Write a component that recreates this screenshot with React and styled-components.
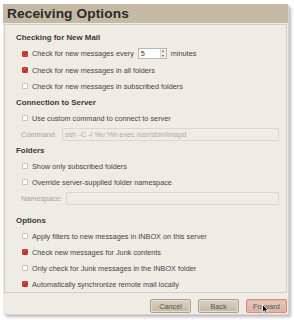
import React from "react";
import styled, { createGlobalStyle } from "styled-components";

const Global = createGlobalStyle`
  html, body { margin: 0; padding: 0; background: #ffffff; }
  body { font-family: "Liberation Sans", Arial, sans-serif; }
  * { box-sizing: border-box; }
`;

const Page = styled.div`
  width: 294px;
  height: 320px;
  padding: 4px 0 0 3px;
  background: #ffffff;
`;

const Window = styled.div`
  position: relative;
  width: 285px;
  height: 310px;
  background: #efebe5;
  display: flex;
  flex-direction: column;
  box-shadow: 1px 1px 0 #d6d3cf, 3px 3px 3px rgba(0, 0, 0, 0.28);
`;

const Header = styled.div`
  height: 19px;
  background: #c6b9a4;
  display: flex;
  align-items: center;
  padding-left: 4px;
  font-weight: bold;
  font-size: 13.7px;
  color: #2b2b2b;
  letter-spacing: 0.1px;
`;

const Panel = styled.div`
  margin: 1px 1px 0 1px;
  flex: 1;
  border: 1px solid #d5cec2;
  padding: 4px 0 0 11px;
  display: flex;
  flex-direction: column;
`;

const Section = styled.div`
  display: flex;
  flex-direction: column;
  margin-top: ${(p) => p.$gap || 0}px;
`;

const Heading = styled.div`
  height: 16px;
  display: flex;
  align-items: center;
  font-weight: bold;
  font-size: 7.9px;
  color: #3a3a3a;
`;

const Row = styled.div`
  height: ${(p) => p.$h || 16}px;
  display: flex;
  align-items: center;
  padding-left: ${(p) => p.$indent ?? 6}px;
  font-size: 7.3px;
  color: #464646;
  gap: 3px;
`;

const Box = styled.span`
  width: 6px;
  height: 6px;
  flex: none;
  border: 1px solid ${(p) => (p.$on ? "#c0392b" : "#c9c2b6")};
  background: ${(p) => (p.$on ? "#e04b33" : "#ffffff")};
  border-radius: 1px;
  margin-right: 1px;
  display: flex;
  align-items: center;
  justify-content: center;
`;

const Check = () => (
  <svg width="5" height="5" viewBox="0 0 5 5">
    <path d="M0.6 2.6 L2 4 L4.5 0.8" stroke="#4a1a10" strokeWidth="1.1" fill="none" />
  </svg>
);

const Checkbox = ({ on }) => <Box $on={on}>{on && <Check />}</Box>;

const Spin = styled.span`
  width: 29px;
  height: 11px;
  border: 1px solid #bdb5a7;
  background: #ffffff;
  display: flex;
  align-items: center;
  font-size: 7.3px;
  color: #333;
  padding-left: 2px;
  position: relative;
  margin: 0 1px;
`;

const SpinArrows = styled.span`
  margin-left: auto;
  width: 6px;
  height: 9px;
  border-left: 1px solid #d8d2c8;
  background: #f1eee9;
  display: flex;
  flex-direction: column;
  align-items: center;
  justify-content: space-around;
`;

const Arrow = styled.span`
  width: 0;
  height: 0;
  border-left: 1.5px solid transparent;
  border-right: 1.5px solid transparent;
  ${(p) => (p.$up ? "border-bottom: 2px solid #555;" : "border-top: 2px solid #555;")}
`;

const Label = styled.span`
  color: #aaa49a;
  width: ${(p) => p.$w}px;
  flex: none;
`;

const Field = styled.span`
  flex: none;
  width: ${(p) => p.$w}px;
  height: 13px;
  border: 1px solid #ddd6ca;
  border-radius: 2px;
  background: #efebe5;
  color: #b2aca2;
  display: flex;
  align-items: center;
  padding-left: 2px;
  overflow: hidden;
  white-space: nowrap;
`;

const ButtonBar = styled.div`
  height: 21px;
  display: flex;
  justify-content: flex-end;
  align-items: flex-start;
  gap: 7px;
  padding: 6px 1px 0 0;
`;

const Button = styled.span`
  width: 41px;
  height: 14px;
  border-radius: 2px;
  border: 1px solid ${(p) => (p.$focus ? "#d98a75" : "#ab9f8c")};
  background: ${(p) =>
    p.$focus
      ? "linear-gradient(#e4c9bd, #d3b4a5)"
      : "linear-gradient(#dbd2c4, #c3b7a4)"};
  box-shadow: inset 0 0 0 1px ${(p) => (p.$focus ? "#e9b4a4" : "#e2dbd0")};
  display: flex;
  align-items: center;
  justify-content: center;
  font-size: 7.3px;
  color: #5a5550;
`;

const Cursor = styled.svg`
  position: absolute;
  left: 259px;
  top: 300px;
`;

export default function App() {
  return (
    <>
      <Global />
      <Page>
        <Window>
          <Header>Receiving Options</Header>
          <Panel>
            <Section>
              <Heading>Checking for New Mail</Heading>
              <Row $h={17}>
                <Checkbox on />
                Check for new messages every
                <Spin>
                  5
                  <SpinArrows>
                    <Arrow $up />
                    <Arrow />
                  </SpinArrows>
                </Spin>
                minutes
              </Row>
              <Row>
                <Checkbox on />
                Check for new messages in all folders
              </Row>
              <Row>
                <Checkbox />
                Check for new messages in subscribed folders
              </Row>
            </Section>
            <Section>
              <Heading>Connection to Server</Heading>
              <Row>
                <Checkbox />
                Use custom command to connect to server
              </Row>
              <Row $indent={5}>
                <Label $w={38}>Command:</Label>
                <Field $w={217}>ssh -C -l %u %h exec /usr/sbin/imapd</Field>
              </Row>
            </Section>
            <Section>
              <Heading>Folders</Heading>
              <Row>
                <Checkbox />
                Show only subscribed folders
              </Row>
              <Row>
                <Checkbox />
                Override server-supplied folder namespace
              </Row>
              <Row $indent={5}>
                <Label $w={42}>Namespace:</Label>
                <Field $w={213} />
              </Row>
            </Section>
            <Section $gap={6}>
              <Heading>Options</Heading>
              <Row>
                <Checkbox />
                Apply filters to new messages in INBOX on this server
              </Row>
              <Row>
                <Checkbox on />
                Check new messages for Junk contents
              </Row>
              <Row>
                <Checkbox />
                Only check for Junk messages in the INBOX folder
              </Row>
              <Row>
                <Checkbox on />
                Automatically synchronize remote mail locally
              </Row>
            </Section>
          </Panel>
          <ButtonBar>
            <Button>Cancel</Button>
            <Button>Back</Button>
            <Button $focus>Forward</Button>
          </ButtonBar>
          <Cursor width="7" height="11" viewBox="0 0 7 11">
            <path d="M0.5 0.5 L0.5 8.5 L2.5 6.8 L4 10 L5.3 9.4 L3.9 6.3 L6.3 6.3 Z" fill="#111" stroke="#fff" strokeWidth="0.8" />
          </Cursor>
        </Window>
      </Page>
    </>
  );
}
